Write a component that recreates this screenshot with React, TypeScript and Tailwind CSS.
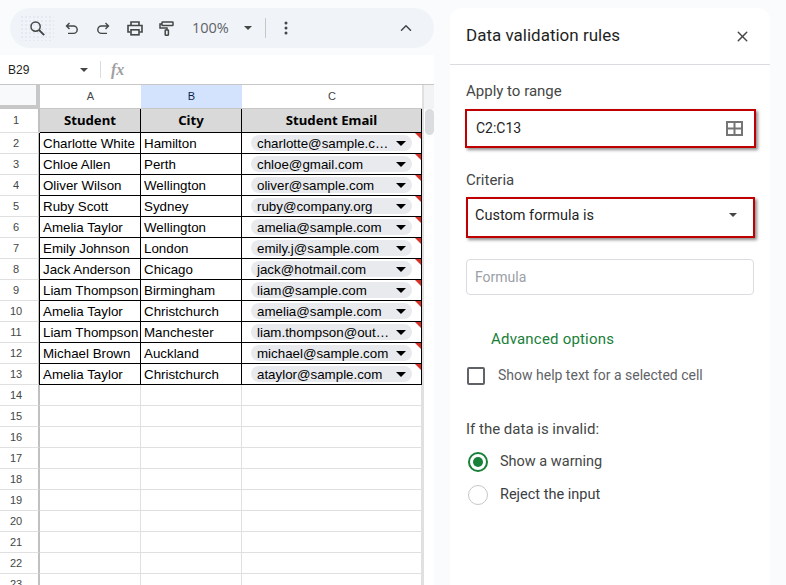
import React from "react";
import { ChevronUp, X } from "lucide-react";

const rows: [string, string, string][] = [
  ["Charlotte White", "Hamilton", "charlotte@sample.c…"],
  ["Chloe Allen", "Perth", "chloe@gmail.com"],
  ["Oliver Wilson", "Wellington", "oliver@sample.com"],
  ["Ruby Scott", "Sydney", "ruby@company.org"],
  ["Amelia Taylor", "Wellington", "amelia@sample.com"],
  ["Emily Johnson", "London", "emily.j@sample.com"],
  ["Jack Anderson", "Chicago", "jack@hotmail.com"],
  ["Liam Thompson", "Birmingham", "liam@sample.com"],
  ["Amelia Taylor", "Christchurch", "amelia@sample.com"],
  ["Liam Thompson", "Manchester", "liam.thompson@out…"],
  ["Michael Brown", "Auckland", "michael@sample.com"],
  ["Amelia Taylor", "Christchurch", "ataylor@sample.com"],
];
const empties = [14, 15, 16, 17, 18, 19, 20, 21, 22, 23];

function Caret({ className }: { className: string }) {
  return <span className={"w-0 h-0 border-x-transparent " + className} />;
}

function RowNum({ n, h }: { n: number; h: string }) {
  return (
    <div className={"w-[40px] shrink-0 bg-white border-r-2 border-r-[#c0c0c0] border-b border-b-[#e0e0e0] flex items-center justify-center text-[11px] text-[#444746] pr-[6px] " + h}>
      {n}
    </div>
  );
}

export default function App() {
  return (
    <div className="w-[786px] h-[585px] overflow-hidden bg-[#f9fbfd] flex font-['Roboto',sans-serif]">
      <div className="w-[434px] shrink-0 flex flex-col">
        <div className="ml-[10px] mt-[8px] h-[40px] shrink-0 rounded-[20px] bg-[#f0f4f9] flex items-center text-[#444746]">
          <div className="ml-[10px] w-[34px] h-[26px] shrink-0 rounded-[4px] flex items-center justify-center bg-[radial-gradient(#e3e8f1_0.7px,transparent_0.8px)] bg-[length:4px_4px]">
            <svg width="15" height="15" viewBox="0 0 15 15" fill="none" stroke="#444746" strokeWidth="1.5">
              <circle cx="5.6" cy="5.6" r="4.6" />
              <path d="M9 9L14.2 14.2" strokeWidth="1.9" />
            </svg>
          </div>
          <svg className="ml-[11px] shrink-0" width="13" height="13" viewBox="0 0 13 13" fill="none" stroke="#444746" strokeWidth="1.4">
            <path d="M4.5 1L1.5 4L4.5 7M1.5 4H8.5A3.6 3.6 0 0 1 8.5 11.4H3" />
          </svg>
          <svg className="ml-[19px] shrink-0" width="13" height="13" viewBox="0 0 13 13" fill="none" stroke="#444746" strokeWidth="1.4">
            <path d="M8.5 1L11.5 4L8.5 7M11.5 4H4.5A3.6 3.6 0 0 0 4.5 11.4H10" />
          </svg>
          <svg className="ml-[17px] shrink-0" width="16" height="15" viewBox="0 0 16 15" fill="none" stroke="#444746" strokeWidth="1.6">
            <path d="M4 4.5V1H12V4.5" />
            <path d="M3.5 11H1V4.5H15V11H12.5" />
            <rect x="4" y="8.8" width="8" height="5" />
          </svg>
          <svg className="ml-[16px] shrink-0" width="15" height="15" viewBox="0 0 15 15" fill="none" stroke="#444746" strokeWidth="1.5">
            <rect x="3" y="1" width="11" height="3.6" rx="0.5" />
            <path d="M3 3H1V7H8V9" />
            <rect x="6.2" y="9" width="3.2" height="5.2" rx="0.4" />
          </svg>
          <span className="ml-[18px] text-[14.5px] text-[#5f6368] font-['Open_Sans',sans-serif]">100%</span>
          <Caret className="ml-[15px] border-x-[4px] border-t-[4px] border-t-[#444746]" />
          <span className="ml-[13px] w-px h-[20px] bg-[#c7c7c7]" />
          <svg className="ml-[18px] shrink-0" width="4" height="14" viewBox="0 0 4 14" fill="#444746">
            <circle cx="2" cy="2" r="1.5" />
            <circle cx="2" cy="7" r="1.5" />
            <circle cx="2" cy="12" r="1.5" />
          </svg>
          <ChevronUp size={18} strokeWidth={2} className="ml-auto mr-[19px]" />
        </div>
        <div className="mt-[7px] h-[30px] shrink-0 bg-white flex items-center border-b border-b-[#c7c7c7]">
          <span className="ml-[8px] w-[72px] text-[12px] text-[#1f1f1f] font-['Liberation_Sans',sans-serif]">B29</span>
          <Caret className="border-x-[4px] border-t-[4px] border-t-[#444746]" />
          <span className="ml-[12px] w-px h-[17px] bg-[#dadce0]" />
          <span className="ml-[10px] text-[16px] italic text-[#a0a0a0] font-['Liberation_Serif',serif] font-bold">fx</span>
        </div>
        <div className="flex flex-1 min-h-0 overflow-hidden bg-white font-['Liberation_Sans',sans-serif]">
          <div className="w-[422px] shrink-0 flex flex-col">
            <div className="flex h-[24px] shrink-0 text-[11px] text-[#444746] border-b border-b-[#c7c7c7]">
              <div className="w-[40px] bg-[#f8f9fa] border-r-[4px] border-b-[3px] border-[#c8c8c8]" />
              <div className="w-[101px] flex items-center justify-center">A</div>
              <div className="w-[101px] flex items-center justify-center bg-[#d3e3fd] text-[#0b1f4b]">B</div>
              <div className="w-[180px] flex items-center justify-center">C</div>
            </div>
            <div className="flex h-[24px] shrink-0">
              <RowNum n={1} h="h-[24px]" />
              <div className="flex-1 flex bg-[#d9d9d9] border-b-[1.5px] border-b-black text-[13.2px] font-bold text-black font-['Noto_Sans',sans-serif]">
                <div className="w-[101px] pt-[1px] border-r border-r-black flex items-center justify-center">Student</div>
                <div className="w-[101px] pt-[1px] border-r border-r-black flex items-center justify-center">City</div>
                <div className="w-[180px] pt-[1px] border-r border-r-black flex items-center justify-center">Student Email</div>
              </div>
            </div>
            {rows.map((r, i) => (
              <div key={i} className="flex h-[21px] shrink-0">
                <RowNum n={i + 2} h="h-[21px]" />
                <div className="flex flex-1 text-[13.33px] text-black border-b border-b-black border-l border-l-black -ml-px">
                  <div className="w-[101px] pt-[1px] border-r border-r-black pl-[3px] flex items-center whitespace-nowrap overflow-hidden">{r[0]}</div>
                  <div className="w-[101px] pt-[1px] border-r border-r-black pl-[3px] flex items-center whitespace-nowrap overflow-hidden">{r[1]}</div>
                  <div className="relative w-[180px] border-r border-r-black flex items-center pl-[9px]">
                    <div className="w-[161px] h-[16px] rounded-[8px] bg-[#e8eaed] flex items-center pl-[6px] pr-[6px] justify-between whitespace-nowrap">
                      <span className="pt-[1px]">{r[2]}</span>
                      <Caret className="border-x-[5px] border-t-[5px] border-t-black" />
                    </div>
                    <span className="absolute right-0 top-0 w-0 h-0 border-l-[6px] border-l-transparent border-t-[6px] border-t-[#d93025]" />
                  </div>
                </div>
              </div>
            ))}
            {empties.map((n) => (
              <div key={n} className="flex h-[21px] shrink-0">
                <RowNum n={n} h="h-[21px]" />
                <div className="w-[101px] border-r border-b border-[#e0e0e0]" />
                <div className="w-[101px] border-r border-b border-[#e0e0e0]" />
                <div className="w-[180px] border-r border-b border-[#e0e0e0]" />
              </div>
            ))}
          </div>
          <div className="w-[12px] shrink-0 flex flex-col border-l-2 border-l-[#e0e0e0] bg-white">
            <div className="h-[24px] shrink-0 bg-[#f1f3f4]" />
            <div className="ml-[1px] w-[9px] h-[26px] rounded-[5px] bg-[#dadce0]" />
          </div>
        </div>
      </div>

      <div className="ml-[16px] mt-[8px] w-[320px] h-[600px] rounded-t-[12px] bg-white flex flex-col">
        <div className="h-[57px] shrink-0 flex items-center justify-between pl-[16px] pr-[19px] border-b border-b-[#dadce0]">
          <span className="text-[17px] text-[#1f1f1f]">Data validation rules</span>
          <X size={17} strokeWidth={2} className="text-[#444746]" />
        </div>
        <div className="flex flex-col pl-[16px] pr-[16px]">
          <div className="mt-[17px] text-[15px] leading-[18px] text-[#444746]">Apply to range</div>
          <div className="mt-[9px] -ml-[1px] h-[39px] w-[291px] border-[2px] border-[#c00000] shadow-[2px_2px_3px_rgba(0,0,0,0.45)] flex items-center justify-between pl-[9px] pr-[11px] text-[14px] text-[#1f1f1f]">
            <span>C2:C13</span>
            <svg width="17" height="15" viewBox="0 0 17 15" fill="none" stroke="#757575" strokeWidth="2">
              <rect x="1" y="1" width="15" height="13" />
              <path d="M8.5 1V14M1 7.5H16" />
            </svg>
          </div>
          <div className="mt-[23px] text-[15px] leading-[18px] text-[#444746]">Criteria</div>
          <div className="mt-[8px] h-[41px] w-[289px] border-[2px] border-[#c00000] shadow-[2px_2px_3px_rgba(0,0,0,0.45)] flex items-start justify-between pl-[7px] pr-[16px] pt-[6px] text-[14.5px] text-[#1f1f1f]">
            <span>Custom formula is</span>
            <Caret className="mt-[8px] border-x-[4px] border-t-[4px] border-t-[#444746]" />
          </div>
          <div className="mt-[21px] h-[36px] w-[288px] rounded-[4px] border border-[#dadce0] flex items-center pl-[8px] text-[14px] text-[#9aa0a6]">Formula</div>
          <div className="mt-[35px] ml-[25px] text-[15px] tracking-[0.2px] leading-[18px] font-normal text-[#188038]">Advanced options</div>
          <div className="mt-[17px] flex items-center">
            <span className="ml-[1px] w-[18px] h-[18px] rounded-[2px] border-2 border-[#5f6368]" />
            <span className="ml-[13px] text-[14px] text-[#5f6368]">Show help text for a selected cell</span>
          </div>
          <div className="mt-[34px] text-[15px] leading-[18px] text-[#444746]">If the data is invalid:</div>
          <div className="mt-[14px] flex items-center h-[20px]">
            <span className="ml-[2px] w-[20px] h-[20px] rounded-full border-2 border-[#188038] flex items-center justify-center">
              <span className="w-[10px] h-[10px] rounded-full bg-[#188038]" />
            </span>
            <span className="ml-[12px] text-[14.5px] text-[#444746]">Show a warning</span>
          </div>
          <div className="mt-[13px] flex items-center h-[20px]">
            <span className="ml-[2px] w-[20px] h-[20px] rounded-full border border-[#c7c7c7]" />
            <span className="ml-[12px] text-[14.5px] text-[#3c4043]">Reject the input</span>
          </div>
        </div>
      </div>
    </div>
  );
}
